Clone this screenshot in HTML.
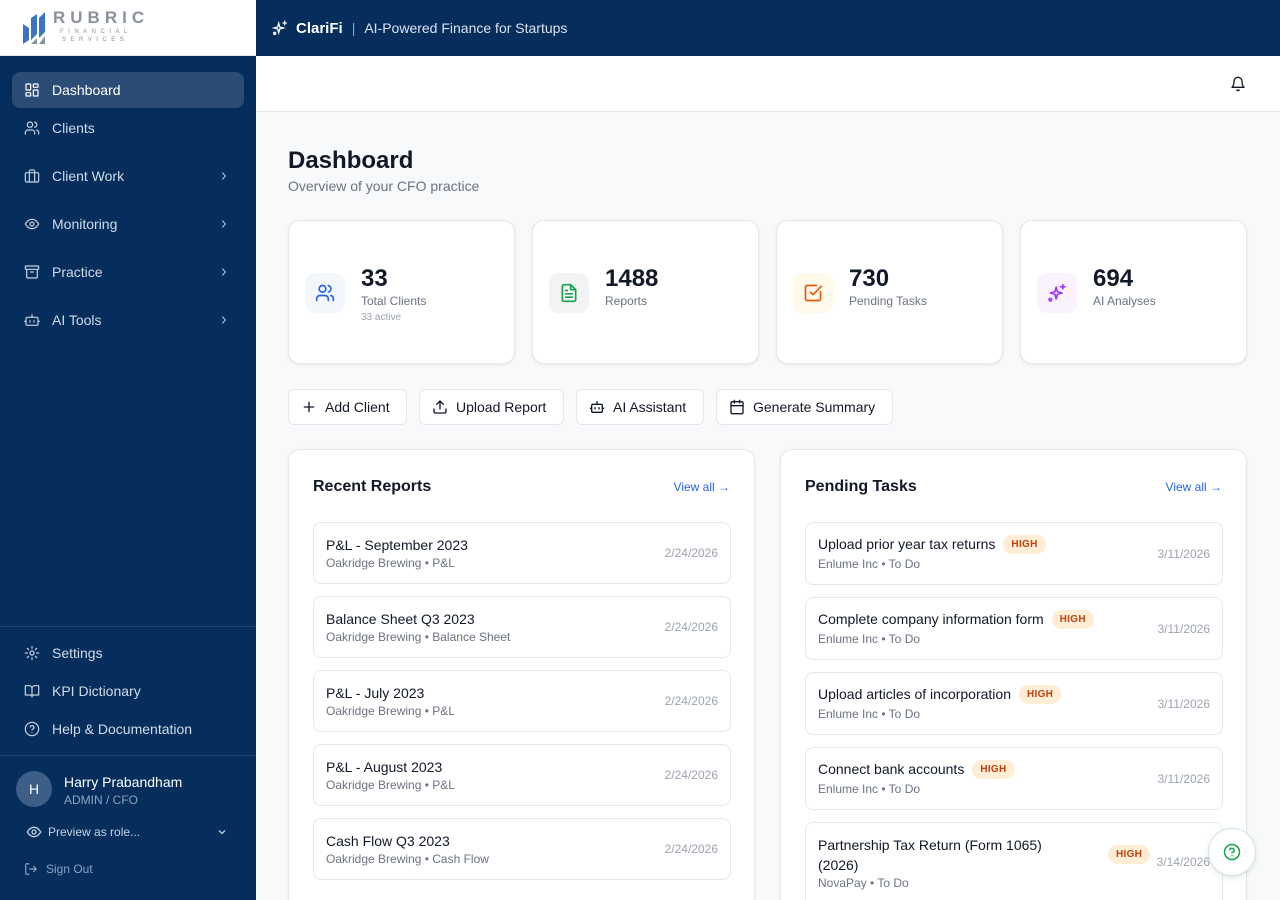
<!DOCTYPE html>
<html><head><meta charset="utf-8"><style>
*{box-sizing:border-box;margin:0;padding:0}
html{width:1280px;height:900px;overflow:hidden}
body{width:1280px;height:900px;overflow:hidden;font-family:"Liberation Sans",Arial,sans-serif;background:#f8f9fb;position:relative;color:#111827}
.sb{position:absolute;left:0;top:0;width:256px;height:900px;background:#052e5c}
.logo{position:absolute;left:0;top:0;width:256px;height:56px;background:#fff;border-bottom:1px solid #e5e7eb}
.hdr{position:absolute;left:256px;top:0;right:0;height:56px;background:#052e5c;color:#fff;display:flex;align-items:center;padding-left:16px;font-size:14px}
.top{position:absolute;left:256px;top:56px;right:0;height:56px;background:#fff;border-bottom:1px solid #e5e7eb}
.nav{position:absolute;left:12px;width:232px;height:36px;display:flex;align-items:center;padding-left:12px;color:#d1dbe8;font-size:14px}
.nav svg{width:16px;height:16px;margin-right:12px;stroke:#c8d3e2;fill:none;stroke-width:1.8;stroke-linecap:round;stroke-linejoin:round}
.nav .ch{position:absolute;right:14px;width:12px;height:12px;margin:0}
.nav.act{background:#2b4c74;border-radius:8px;color:#fff}
.hr{position:absolute;left:0;width:256px;height:1px;background:#1f4672}
.card{position:absolute;top:220px;width:227px;height:144px;background:#fff;border:1px solid #e5e7eb;border-radius:12px;box-shadow:0 1px 3px rgba(0,0,0,.08)}
.ic{position:absolute;left:16px;top:52px;width:40px;height:40px;border-radius:10px;display:flex;align-items:center;justify-content:center}
.ic svg{width:20px;height:20px;fill:none;stroke-width:2;stroke-linecap:round;stroke-linejoin:round}
.num{position:absolute;left:72px;top:44px;font-size:24px;font-weight:bold;color:#111827}
.lbl{position:absolute;left:72px;top:73px;font-size:12px;color:#6b7280}
.sub{position:absolute;left:72px;top:91px;font-size:10px;color:#9ca3af}
.btn{position:absolute;top:389px;height:36px;background:#fff;border:1px solid #e5e7eb;border-radius:6px;display:flex;align-items:center;padding-left:12px;font-size:14px;color:#111827;font-weight:500}
.btn svg{width:16px;height:16px;margin-right:8px;fill:none;stroke:#111827;stroke-width:2;stroke-linecap:round;stroke-linejoin:round}
.panel{position:absolute;top:449px;width:467px;height:470px;background:#fff;border:1px solid #e5e7eb;border-radius:12px;box-shadow:0 1px 3px rgba(0,0,0,.06)}
.pt{position:absolute;left:24px;top:28px;font-size:16px;font-weight:bold;color:#111827}
.va{position:absolute;right:24px;top:30px;font-size:12px;color:#2563eb}
.row{position:absolute;left:24px;width:418px;border:1px solid #e5e7eb;border-radius:8px}
.rt{position:absolute;left:12px;top:14px;font-size:14px;color:#111827}
.rs{position:absolute;left:12px;font-size:12px;color:#6b7280}
.rd{position:absolute;right:12px;font-size:12px;color:#9ca3af}
.hi{display:inline-block;background:#ffedd5;color:#c2410c;font-size:10px;font-weight:600;padding:4px 8px;border-radius:10px;margin-left:8px;vertical-align:2px;letter-spacing:.3px}
</style></head><body>
<div class="sb"></div>
<div class="logo">
<svg style="position:absolute;left:23px;top:10px" width="26" height="36" viewBox="0 0 26 36"><path d="M0 14 L6 18 L6 30 L0 34Z" fill="#3b74c4"/><path d="M8 8 L14 4 L14 24 L8 30Z" fill="#3b74c4"/><path d="M16 8 L22 2 L22 22 L16 28Z" fill="#3b74c4"/><path d="M8 34 L14 28 L14 34Z M16 34 L22 26 L22 34Z" fill="#8a919e"/></svg>
<div style="position:absolute;left:53px;top:8px;font-size:17px;font-weight:bold;letter-spacing:5px;color:#8a919e">RUBRIC</div>
<div style="position:absolute;left:60px;top:29px;font-size:6px;letter-spacing:4.5px;color:#8a919e">FINANCIAL</div>
<div style="position:absolute;left:62px;top:37px;font-size:6px;letter-spacing:4.5px;color:#8a919e">SERVICES</div>
</div>
<div class="hdr"><svg width="16" height="16" viewBox="0 0 24 24" fill="none" stroke="#fff" stroke-width="2" stroke-linecap="round"><path d="M10 5 L11.5 10.5 L17 12 L11.5 13.5 L10 19 L8.5 13.5 L3 12 L8.5 10.5Z"/><path d="M19 2v5M16.5 4.5h5"/><circle cx="4" cy="20" r="1.5"/></svg><b style="margin-left:8px;font-size:15px">ClariFi</b><span style="margin:0 9px;color:#8fa3bf">|</span><span style="color:#dbe3ee">AI-Powered Finance for Startups</span></div>
<div class="top"><svg style="position:absolute;right:34px;top:20px" width="16" height="16" viewBox="0 0 24 24" fill="none" stroke="#111827" stroke-width="2" stroke-linecap="round" stroke-linejoin="round"><path d="M6 8a6 6 0 0 1 12 0c0 7 3 9 3 9H3s3-2 3-9"/><path d="M10.3 21a1.94 1.94 0 0 0 3.4 0"/></svg></div>

<div class="nav act" style="top:72px"><svg viewBox="0 0 24 24" style="stroke:#fff"><rect x="3" y="3" width="7" height="9" rx="1"/><rect x="14" y="3" width="7" height="5" rx="1"/><rect x="14" y="12" width="7" height="9" rx="1"/><rect x="3" y="16" width="7" height="5" rx="1"/></svg>Dashboard</div>
<div class="nav" style="top:110px"><svg viewBox="0 0 24 24"><circle cx="9" cy="7" r="4"/><path d="M2 21v-2a4 4 0 0 1 4-4h6a4 4 0 0 1 4 4v2M16 3.1a4 4 0 0 1 0 7.8M22 21v-2a4 4 0 0 0-3-3.9"/></svg>Clients</div>
<div class="nav" style="top:158px"><svg viewBox="0 0 24 24"><rect x="2" y="7" width="20" height="14" rx="2"/><path d="M16 21V5a2 2 0 0 0-2-2h-4a2 2 0 0 0-2 2v16"/></svg>Client Work<svg class="ch" viewBox="0 0 24 24"><path d="M9 6l6 6-6 6"/></svg></div>
<div class="nav" style="top:206px"><svg viewBox="0 0 24 24"><path d="M2 12s3.5-7 10-7 10 7 10 7-3.5 7-10 7S2 12 2 12Z"/><circle cx="12" cy="12" r="3"/></svg>Monitoring<svg class="ch" viewBox="0 0 24 24"><path d="M9 6l6 6-6 6"/></svg></div>
<div class="nav" style="top:254px"><svg viewBox="0 0 24 24"><rect x="2" y="3" width="20" height="5" rx="1"/><path d="M4 8v11a2 2 0 0 0 2 2h12a2 2 0 0 0 2-2V8M10 12h4"/></svg>Practice<svg class="ch" viewBox="0 0 24 24"><path d="M9 6l6 6-6 6"/></svg></div>
<div class="nav" style="top:302px"><svg viewBox="0 0 24 24"><rect x="3" y="8" width="18" height="12" rx="2"/><path d="M12 8V4M9 13v2M15 13v2M1 14h2M21 14h2"/></svg>AI Tools<svg class="ch" viewBox="0 0 24 24"><path d="M9 6l6 6-6 6"/></svg></div>
<div class="hr" style="top:626px"></div>
<div class="nav" style="top:635px"><svg viewBox="0 0 24 24"><circle cx="12" cy="12" r="3"/><path d="M12 2v3M12 19v3M4.9 4.9l2.1 2.1M17 17l2.1 2.1M2 12h3M19 12h3M4.9 19.1L7 17M17 7l2.1-2.1"/></svg>Settings</div>
<div class="nav" style="top:673px"><svg viewBox="0 0 24 24"><path d="M2 4h6a4 4 0 0 1 4 4v13a3 3 0 0 0-3-3H2ZM22 4h-6a4 4 0 0 0-4 4v13a3 3 0 0 1 3-3h7Z"/></svg>KPI Dictionary</div>
<div class="nav" style="top:711px"><svg viewBox="0 0 24 24"><circle cx="12" cy="12" r="10"/><path d="M9.1 9a3 3 0 0 1 5.8 1c0 2-3 3-3 3M12 17h.01"/></svg>Help &amp; Documentation</div>
<div class="hr" style="top:755px"></div>
<div style="position:absolute;left:16px;top:771px;width:36px;height:36px;border-radius:50%;background:#3d5f87;color:#fff;font-size:14px;display:flex;align-items:center;justify-content:center">H</div>
<div style="position:absolute;left:64px;top:774px;color:#fff;font-size:14px">Harry Prabandham</div>
<div style="position:absolute;left:64px;top:793px;color:#8fa3bf;font-size:12px">ADMIN / CFO</div>
<div style="position:absolute;left:26px;top:824px;color:#c8d3e2;font-size:12px;display:flex;align-items:center"><svg width="16" height="16" viewBox="0 0 24 24" fill="none" stroke="#c8d3e2" stroke-width="2" style="margin-right:6px"><path d="M2 12s3.5-7 10-7 10 7 10 7-3.5 7-10 7S2 12 2 12Z"/><circle cx="12" cy="12" r="3"/></svg>Preview as role...</div>
<svg style="position:absolute;left:216px;top:826px" width="12" height="12" viewBox="0 0 24 24" fill="none" stroke="#c8d3e2" stroke-width="2.5"><path d="M6 9l6 6 6-6"/></svg>
<div style="position:absolute;left:24px;top:862px;color:#8fa3bf;font-size:12px;display:flex;align-items:center"><svg width="14" height="14" viewBox="0 0 24 24" fill="none" stroke="#8fa3bf" stroke-width="2" style="margin-right:8px"><path d="M9 21H5a2 2 0 0 1-2-2V5a2 2 0 0 1 2-2h4M16 17l5-5-5-5M21 12H9"/></svg>Sign Out</div>

<div style="position:absolute;left:288px;top:147px;font-size:24px;font-weight:bold">Dashboard</div>
<div style="position:absolute;left:288px;top:178px;font-size:14px;color:#6b7280">Overview of your CFO practice</div>

<div class="card" style="left:288px"><div class="ic" style="background:#f3f6fa"><svg viewBox="0 0 24 24" stroke="#2563eb"><circle cx="9" cy="7" r="4"/><path d="M2 21v-2a4 4 0 0 1 4-4h6a4 4 0 0 1 4 4v2M16 3.1a4 4 0 0 1 0 7.8M22 21v-2a4 4 0 0 0-3-3.9"/></svg></div><div class="num">33</div><div class="lbl">Total Clients</div><div class="sub">33 active</div></div>
<div class="card" style="left:532px"><div class="ic" style="background:#f1f3f4"><svg viewBox="0 0 24 24" stroke="#16a34a"><path d="M14 2H6a2 2 0 0 0-2 2v16a2 2 0 0 0 2 2h12a2 2 0 0 0 2-2V8Z"/><path d="M14 2v6h6M8 13h8M8 17h8M8 9h2"/></svg></div><div class="num">1488</div><div class="lbl">Reports</div></div>
<div class="card" style="left:776px"><div class="ic" style="background:#fef9e8"><svg viewBox="0 0 24 24" stroke="#ea580c"><path d="M21 10.5V19a2 2 0 0 1-2 2H5a2 2 0 0 1-2-2V5a2 2 0 0 1 2-2h11"/><path d="M9 11l3 3L22 4"/></svg></div><div class="num">730</div><div class="lbl">Pending Tasks</div></div>
<div class="card" style="left:1020px"><div class="ic" style="background:#faf3ff"><svg viewBox="0 0 24 24" stroke="#a334f0"><path d="M11 5 L12.5 10.5 L18 12 L12.5 13.5 L11 19 L9.5 13.5 L4 12 L9.5 10.5Z"/><path d="M19 2v5M16.5 4.5h5"/><circle cx="4" cy="20" r="1.5"/></svg></div><div class="num">694</div><div class="lbl">AI Analyses</div></div>

<div class="btn" style="left:288px;width:119px"><svg viewBox="0 0 24 24"><path d="M12 5v14M5 12h14"/></svg>Add Client</div>
<div class="btn" style="left:419px;width:145px"><svg viewBox="0 0 24 24"><path d="M21 15v4a2 2 0 0 1-2 2H5a2 2 0 0 1-2-2v-4M17 8l-5-5-5 5M12 3v12"/></svg>Upload Report</div>
<div class="btn" style="left:576px;width:128px"><svg viewBox="0 0 24 24"><rect x="4" y="8" width="16" height="12" rx="2"/><path d="M12 8V4M9 13v2M15 13v2M2 14h2M20 14h2"/></svg>AI Assistant</div>
<div class="btn" style="left:716px;width:177px"><svg viewBox="0 0 24 24"><rect x="3" y="4" width="18" height="18" rx="2"/><path d="M16 2v4M8 2v4M3 10h18"/></svg>Generate Summary</div>

<div class="panel" style="left:288px"><div class="pt">Recent Reports</div><div class="va">View all →</div>
<div class="row" style="top:72px;height:62px"><div class="rt">P&amp;L - September 2023</div><div class="rs" style="top:33px">Oakridge Brewing • P&amp;L</div><div class="rd" style="top:23px">2/24/2026</div></div>
<div class="row" style="top:146px;height:62px"><div class="rt">Balance Sheet Q3 2023</div><div class="rs" style="top:33px">Oakridge Brewing • Balance Sheet</div><div class="rd" style="top:23px">2/24/2026</div></div>
<div class="row" style="top:220px;height:62px"><div class="rt">P&amp;L - July 2023</div><div class="rs" style="top:33px">Oakridge Brewing • P&amp;L</div><div class="rd" style="top:23px">2/24/2026</div></div>
<div class="row" style="top:294px;height:62px"><div class="rt">P&amp;L - August 2023</div><div class="rs" style="top:33px">Oakridge Brewing • P&amp;L</div><div class="rd" style="top:23px">2/24/2026</div></div>
<div class="row" style="top:368px;height:62px"><div class="rt">Cash Flow Q3 2023</div><div class="rs" style="top:33px">Oakridge Brewing • Cash Flow</div><div class="rd" style="top:23px">2/24/2026</div></div>
</div>

<div class="panel" style="left:780px"><div class="pt">Pending Tasks</div><div class="va">View all →</div>
<div class="row" style="top:72px;height:63px"><div class="rt" style="top:12px">Upload prior year tax returns<span class="hi">HIGH</span></div><div class="rs" style="top:34px">Enlume Inc • To Do</div><div class="rd" style="top:24px">3/11/2026</div></div>
<div class="row" style="top:147px;height:63px"><div class="rt" style="top:12px">Complete company information form<span class="hi">HIGH</span></div><div class="rs" style="top:34px">Enlume Inc • To Do</div><div class="rd" style="top:24px">3/11/2026</div></div>
<div class="row" style="top:222px;height:63px"><div class="rt" style="top:12px">Upload articles of incorporation<span class="hi">HIGH</span></div><div class="rs" style="top:34px">Enlume Inc • To Do</div><div class="rd" style="top:24px">3/11/2026</div></div>
<div class="row" style="top:297px;height:63px"><div class="rt" style="top:12px">Connect bank accounts<span class="hi">HIGH</span></div><div class="rs" style="top:34px">Enlume Inc • To Do</div><div class="rd" style="top:24px">3/11/2026</div></div>
<div class="row" style="top:372px;height:90px"><div class="rt" style="top:12px;width:260px;line-height:20px">Partnership Tax Return (Form 1065) (2026)</div><span class="hi" style="position:absolute;left:294px;top:22px">HIGH</span><div class="rs" style="top:53px">NovaPay • To Do</div><div class="rd" style="top:32px">3/14/2026</div></div>
</div>

<div style="position:absolute;left:1208px;top:828px;width:48px;height:48px;border-radius:50%;background:#fff;border:1px solid #d1e7dd;box-shadow:0 2px 6px rgba(0,0,0,.1);display:flex;align-items:center;justify-content:center"><svg width="18" height="18" viewBox="0 0 24 24" fill="none" stroke="#16a34a" stroke-width="2" stroke-linecap="round"><circle cx="12" cy="12" r="10"/><path d="M9.1 9a3 3 0 0 1 5.8 1c0 2-3 3-3 3M12 17h.01"/></svg></div>
</body></html>
